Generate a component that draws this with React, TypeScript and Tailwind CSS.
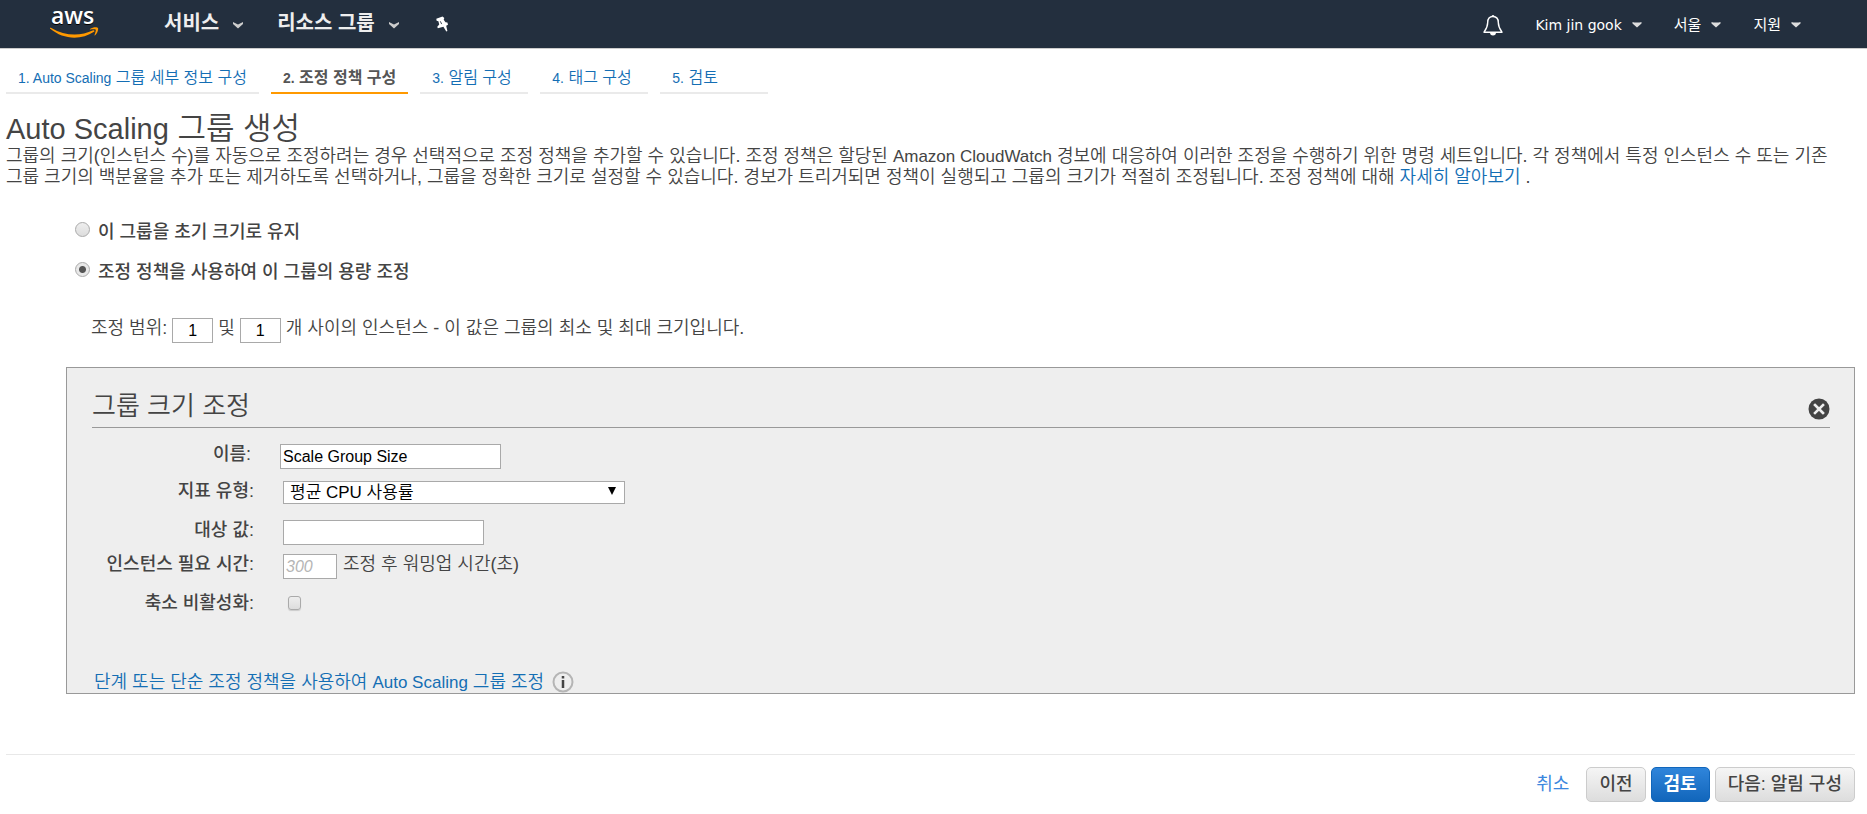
import { useState } from 'react';
import type { ReactNode } from 'react';
import { clsx } from 'clsx';

const steps = [
  <><Latin>1. Auto Scaling</Latin> 그룹 세부 정보 구성</>,
  <><Latin>2.</Latin> 조정 정책 구성</>,
  <><Latin>3.</Latin> 알림 구성</>,
  <><Latin>4.</Latin> 태그 구성</>,
  <><Latin>5.</Latin> 검토</>,
];

const inputClass = 'h-[25px] border border-[#a9a9a9] bg-white text-[16px] font-normal text-black outline-none';

// Latin text runs a little smaller than the Hangul around it
function Latin({ children, className = 'text-[14px]' }: { children: ReactNode; className?: string }) {
  return <span className={className}>{children}</span>;
}

function AwsLogo() {
  return (
    <svg viewBox="0 0 50 39" className="h-[39px] w-[50px]" role="img" aria-label="aws">
      <text x="1" y="24" fill="#fff" fontSize="23" fontFamily="Open Sans, sans-serif" fontWeight="600">aws</text>
      <path d="M0 28c.3-.5.800-.4 1.300-.1C15 36 30 36.500 43.200 30.300c1-.4 1.800.6.800 1.400C31 40.500 13 39.500.300 28.800c-.3-.3-.4-.5-.3-.8z" fill="#f90" />
      <path d="M40 29c3-2.200 7.500-1.900 8-1 .5.800-.2 5-2.800 7.300-.5.400-.9.200-.7-.3.700-1.600 1.700-4.700 1.200-5.400-.6-.7-3.700-.4-5.300-.2-.6.1-.8-.1-.4-.4z" fill="#f90" />
    </svg>
  );
}

function Chevron() {
  return (
    <svg viewBox="0 0 10 7" className="mt-[6px] h-[7px] w-[10px]" aria-hidden="true">
      <path d="M0 0l5 2.500L10 0v2L5 6.500 0 2z" fill="#ccc" />
    </svg>
  );
}

function Caret() {
  return (
    <svg viewBox="0 0 10 6" className="h-[6px] w-[10px]" aria-hidden="true">
      <path d="M.500 0c2 .7 7 .7 9 0v1.500L5 5.500.500 1.500z" fill="#ddd" />
    </svg>
  );
}

function PinIcon() {
  return (
    <svg viewBox="0 0 16 16" className="h-4 w-4" aria-hidden="true">
      <path d="M7.500.5L1.300 2.800l.3 1.900 1.800.6.8 3.200-1.900 2.200.5 1.500 5.600-1.400 2.900 4.700 1.100-.5-1.200-5.300 1.800-1-.6-2.100-1.900-.4-1.800-2.500.6-1.700z" fill="#fff" />
      <path d="M5.300 5.300l1.400 2.800" stroke="#232f3e" strokeWidth=".9" />
    </svg>
  );
}

function BellIcon() {
  return (
    <svg viewBox="0 0 20 22" className="h-[22px] w-5" aria-hidden="true">
      <path d="M10 2.500c-3.800 0-5.300 3-5.300 6C4.700 13 3 15.500 1 18.200h18c-2-2.700-3.700-5.200-3.700-9.700 0-3-1.500-6-5.300-6z" fill="none" stroke="#fff" strokeWidth="1.400" strokeLinejoin="round" />
      <path d="M8.500 2.500a1.500 1.500 0 013 0zM7 18.500a3 3 0 006 0z" fill="#fff" />
    </svg>
  );
}

function Header() {
  return (
    <header className="flex h-[49px] items-start border-b border-[#ccc] bg-[#232f3e] font-normal text-white [text-shadow:0_1px_0_#000]">
      <a href="#" className="ml-[50px]"><AwsLogo /></a>
      <nav className="ml-16 flex h-[45px] items-center text-[20px] font-bold text-[#eee]">
        <button type="button" className="flex items-center gap-[14px]">서비스 <Chevron /></button>
        <button type="button" className="ml-[34px] flex items-center gap-[14px]">리소스 그룹 <Chevron /></button>
      </nav>
      <button type="button" aria-label="바로 가기 고정" className="ml-9 mt-4"><PinIcon /></button>
      <div className="ml-auto mr-[66px] flex h-[50px] items-center gap-8 text-[15px]">
        <button type="button" aria-label="알림"><BellIcon /></button>
        <button type="button" className="flex items-center gap-[10px] font-['DejaVu_Sans','Noto_Sans_CJK_KR',sans-serif] text-[14px]">Kim jin gook <Caret /></button>
        <button type="button" className="flex items-center gap-[10px]">서울 <Caret /></button>
        <button type="button" className="flex items-center gap-[10px]">지원 <Caret /></button>
      </div>
    </header>
  );
}

function Steps() {
  return (
    <ol className="flex gap-3 pt-[18px] text-[16px] leading-[22px]">
      {steps.map((step, index) => (
        <li
          key={index}
          className={clsx(
            'min-w-[108px] border-b-2 px-3 pb-[3px]',
            index === 1 ? 'border-[#ff9900] font-bold text-[#555]' : 'border-[#eaeaea] text-[#146eb4]',
          )}
        >
          {index === 1 ? step : <a href="#">{step}</a>}
        </li>
      ))}
    </ol>
  );
}

function Field({ id, label, className, children }: { id: string; label: string; className: string; children: ReactNode }) {
  return (
    <div className={clsx('flex items-start', className)}>
      <label htmlFor={id} className="mr-[29px] w-[162px] text-right font-medium leading-5">{label}</label>
      {children}
    </div>
  );
}

function PolicyPanel() {
  return (
    <section className="ml-[60px] mt-6 border border-[#999] bg-[#eee] pl-[25px] pr-6">
      <div className="flex h-[60px] items-end justify-between border-b border-[#999] pb-[7px]">
        <h2 className="text-[26px] leading-[28px]">그룹 크기 조정</h2>
        <button type="button" aria-label="닫기">
          <svg viewBox="0 0 22 22" className="h-[22px] w-[22px]">
            <circle cx="11" cy="11" r="10.500" fill="#444" />
            <path d="M7 7l8 8M15 7l-8 8" stroke="#eee" strokeWidth="2.600" strokeLinecap="square" />
          </svg>
        </button>
      </div>

      <Field id="policy-name" label="이름:" className="-ml-[3px] pt-4">
        <input id="policy-name" type="text" defaultValue="Scale Group Size" className={clsx(inputClass, 'w-[221px] px-[2px]')} />
      </Field>
      <Field id="metric-type" label="지표 유형:" className="pt-3">
        <div className="relative flex">
          <select id="metric-type" className="h-[23px] w-[342px] appearance-none border border-[#a9a9a9] bg-white pl-[6px] text-[17px] leading-[21px] text-black">
            <option>평균 CPU 사용률</option>
          </select>
          <svg viewBox="0 0 8 8" className="pointer-events-none absolute right-[9px] top-[6px] h-2 w-2" aria-hidden="true">
            <path d="M0 0h8L4 8z" fill="#000" />
          </svg>
        </div>
      </Field>
      <Field id="target-value" label="대상 값:" className="pt-4">
        <input id="target-value" type="text" className={clsx(inputClass, 'w-[201px] px-[2px]')} />
      </Field>
      <Field id="warm-up" label="인스턴스 필요 시간:" className="pt-[9px]">
        <input id="warm-up" type="text" placeholder="300" className={clsx(inputClass, 'w-[54px] px-[2px] placeholder:italic placeholder:text-[#b5b5b5]')} />
        <span className="ml-[6px] leading-5">조정 후 워밍업 시간(초)</span>
      </Field>
      <Field id="disable-scale-in" label="축소 비활성화:" className="pt-[14px]">
        <input id="disable-scale-in" type="checkbox" className="ml-[5px] mt-[3px] h-[14px] w-[13px] appearance-none rounded-[3px] border border-[#aaa] bg-linear-to-b from-[#eee] to-[#ddd] shadow-[0_1px_1px_rgba(0,0,0,0.15)]" />
      </Field>

      <div className="flex items-center gap-2 pl-[2px] pt-[58px]">
        <a href="#" className="leading-5 text-[#146eb4]">단계 또는 단순 조정 정책을 사용하여 <Latin className="text-[17px]">Auto Scaling</Latin> 그룹 조정</a>
        <svg viewBox="0 0 22 22" className="h-[22px] w-[22px]" role="img" aria-label="정보">
          <circle cx="11" cy="11" r="9.500" fill="#eee" stroke="#b5b5b5" strokeWidth="2" />
          <path d="M11 9v8M11 5v2.500" stroke="#444" strokeWidth="2.500" />
        </svg>
      </div>
    </section>
  );
}

const radioClass = 'h-[15px] w-[15px] appearance-none rounded-full border border-[#aaa] bg-linear-to-b from-[#eee] to-[#ddd] checked:bg-[radial-gradient(circle,#555_3px,#e8e8e8_4px)]';
const buttonClass = 'h-[35px] rounded-[5px] border border-[#ccc] bg-linear-to-b from-[#f5f5f5] to-[#ddd] px-3 font-medium text-[#444]';

export default function App() {
  const [mode, setMode] = useState('policy');

  return (
    <div className="bg-white font-['Liberation_Sans','Noto_Sans_CJK_KR',sans-serif] text-[18px] font-[350] text-[#444]">
      <Header />
      <main className="pl-[6px] pr-3">
        <Steps />
        <h1 className="mt-[18px] text-[31px] leading-[34px]"><Latin className="text-[29px]">Auto Scaling</Latin> 그룹 생성</h1>
        <p className="pr-4 leading-[21px] break-keep">
          그룹의 크기(인스턴스 수)를 자동으로 조정하려는 경우 선택적으로 조정 정책을 추가할 수 있습니다. 조정 정책은 할당된{' '}
          <Latin className="text-[17px]">Amazon CloudWatch</Latin> 경보에 대응하여 이러한 조정을 수행하기 위한 명령 세트입니다. 각 정책에서 특정 인스턴스 수 또는 기존
          그룹 크기의 백분율을 추가 또는 제거하도록 선택하거나, 그룹을 정확한 크기로 설정할 수 있습니다. 경보가 트리거되면 정책이 실행되고 그룹의 크기가 적절히 조정됩니다. 조정 정책에 대해{' '}
          <a href="#" className="text-[#146eb4]">자세히 알아보기</a> .
        </p>

        <div className="ml-[69px] mt-[34px] flex flex-col gap-5 font-medium leading-5">
          <label className="flex items-start gap-2">
            <input type="radio" name="mode" checked={mode === 'keep'} onChange={() => setMode('keep')} className={radioClass} />
            이 그룹을 초기 크기로 유지
          </label>
          <label className="flex items-start gap-2">
            <input type="radio" name="mode" checked={mode === 'policy'} onChange={() => setMode('policy')} className={radioClass} />
            조정 정책을 사용하여 이 그룹의 용량 조정
          </label>
        </div>

        <div className="ml-[85px] mt-9 flex h-[25px] gap-[5px] leading-[21px]">
          <label htmlFor="min-size">조정 범위:</label>
          <input id="min-size" type="text" defaultValue="1" className={clsx(inputClass, 'w-[41px] text-center')} />
          <label htmlFor="max-size">및</label>
          <input id="max-size" type="text" defaultValue="1" className={clsx(inputClass, 'w-[41px] text-center')} />
          <span>개 사이의 인스턴스 - 이 값은 그룹의 최소 및 최대 크기입니다.</span>
        </div>

        <PolicyPanel />

        <footer className="mt-[60px] flex items-center justify-end gap-[5px] border-t border-[#e8e8e8] pt-3">
          <a href="#" className="mr-3 font-normal text-[#3b87de]">취소</a>
          <button type="button" className={buttonClass}>이전</button>
          <button type="button" className="h-[35px] rounded-[5px] border border-[#1166bb] bg-linear-to-b from-[#2f85db] to-[#1166bb] px-3 font-bold text-white">검토</button>
          <button type="button" className={buttonClass}>다음: 알림 구성</button>
        </footer>
      </main>
    </div>
  );
}
